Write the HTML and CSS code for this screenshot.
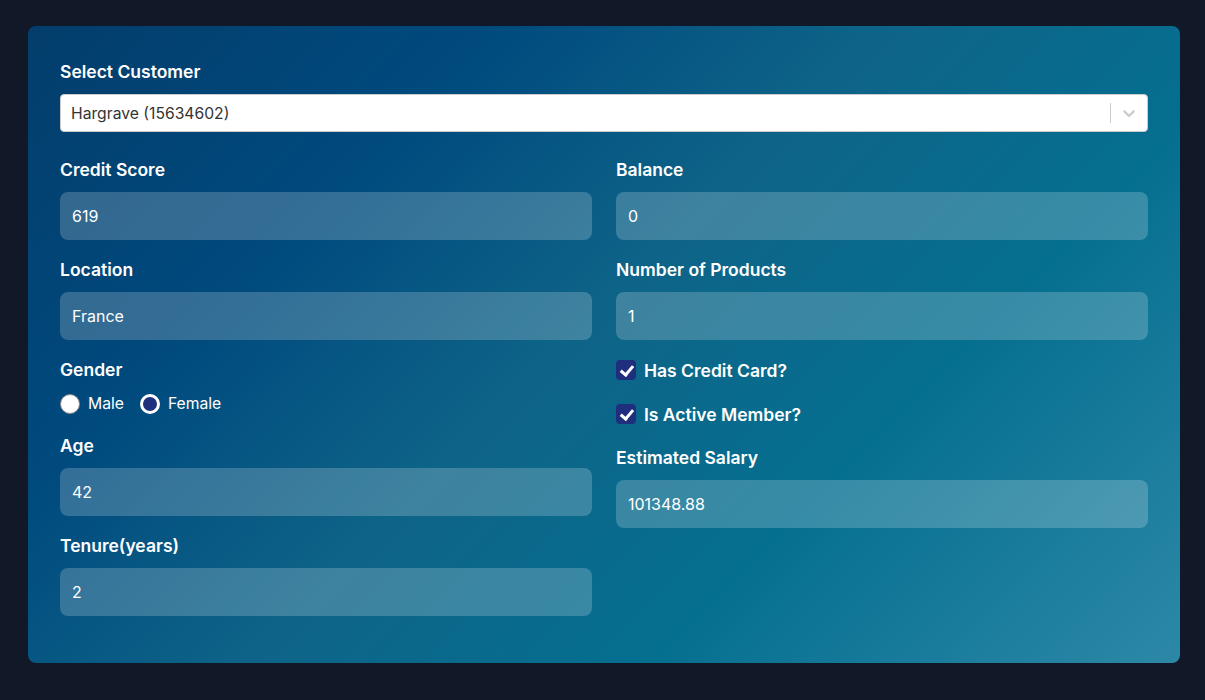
FILE: index.html
```html
<!DOCTYPE html>
<html lang="en">
<head>
<meta charset="utf-8">
<title>Customer</title>
<link rel="stylesheet" href="styles.css">
</head>
<body>
<div class="wrap">
  <div class="card">
    <div class="field">
      <label class="lbl">Select Customer</label>
      <div class="select">
        <div class="select-value">Hargrave (15634602)</div>
        <div class="indicators">
          <span class="sep"></span>
          <span class="chev">
            <svg width="20" height="20" viewBox="0 0 20 20"><path fill="#cccccc" d="M4.516 7.548c0.436-0.446 1.043-0.481 1.576 0l3.908 3.747 3.908-3.747c0.533-0.481 1.141-0.446 1.574 0 0.436 0.445 0.408 1.197 0 1.615-0.406 0.418-4.695 4.502-4.695 4.502-0.217 0.223-0.502 0.335-0.787 0.335s-0.57-0.112-0.789-0.335c0 0-4.287-4.084-4.695-4.502s-0.436-1.17 0-1.615z"/></svg>
          </span>
        </div>
      </div>
    </div>
    <div class="grid">
      <div class="col">
        <div class="field">
          <label class="lbl">Credit Score</label>
          <input class="inp" type="text" value="619">
        </div>
        <div class="field">
          <label class="lbl">Location</label>
          <input class="inp" type="text" value="France">
        </div>
        <div class="field">
          <label class="lbl">Gender</label>
          <div class="radios">
            <label class="opt"><input type="radio" name="g" class="radio">Male</label>
            <label class="opt"><input type="radio" name="g" class="radio" checked>Female</label>
          </div>
        </div>
        <div class="field">
          <label class="lbl">Age</label>
          <input class="inp" type="text" value="42">
        </div>
        <div class="field">
          <label class="lbl">Tenure(years)</label>
          <input class="inp" type="text" value="2">
        </div>
      </div>
      <div class="col">
        <div class="field">
          <label class="lbl">Balance</label>
          <input class="inp" type="text" value="0">
        </div>
        <div class="field">
          <label class="lbl">Number of Products</label>
          <input class="inp" type="text" value="1">
        </div>
        <label class="check"><input type="checkbox" class="cb" checked>Has Credit Card?</label>
        <label class="check"><input type="checkbox" class="cb" checked>Is Active Member?</label>
        <div class="field">
          <label class="lbl">Estimated Salary</label>
          <input class="inp" type="text" value="101348.88">
        </div>
      </div>
    </div>
  </div>
</div>
</body>
</html>
```
FILE: styles.css
```css
* { box-sizing: border-box; }
html, body { margin: 0; padding: 0; }
body {
  background: #111827;
  font-family: Inter, "Noto Sans", "Liberation Sans", sans-serif;
  color: #fff;
}
.wrap {
  padding: 26px 25px 0 28px;
}
.card {
  border-radius: 8px;
  padding: 32px 32px 47px;
  background: linear-gradient(135deg, #033d6b 0%, #004a7e 26%, #0e6488 48%, #056f90 70%, #2d88a7 100%);
}
.field { display: flex; flex-direction: column; }
.lbl {
  font-size: 17.5px;
  line-height: 28px;
  font-weight: 600;
  margin-bottom: 8px;
}
.select {
  display: flex;
  align-items: center;
  height: 38px;
  background: #fff;
  border: 1px solid #cccccc;
  border-radius: 4px;
  color: #333333;
  font-size: 15.7px;
  margin-bottom: 24px;
}
.select-value { flex: 1; padding: 2px 10px; }
.indicators { display: flex; align-self: stretch; align-items: center; }
.sep { width: 1px; align-self: stretch; margin: 8px 0; background: #cccccc; }
.chev { display: flex; padding: 8px; }
.grid {
  display: grid;
  grid-template-columns: 1fr 1fr;
  column-gap: 24px;
}
.col { display: flex; flex-direction: column; gap: 16px; }
.inp {
  height: 48px;
  border: none;
  border-radius: 8px;
  background: rgba(255,255,255,0.2);
  color: #fff;
  font-family: inherit;
  font-size: 16px;
  padding: 0 12px;
  outline: none;
}
.radios { display: flex; align-items: center; gap: 16px; height: 24px; }
.opt { display: flex; align-items: center; gap: 8px; font-size: 15.7px; line-height: 24px; }
.radio {
  appearance: none;
  -webkit-appearance: none;
  margin: 0;
  width: 20px;
  height: 20px;
  border-radius: 50%;
  background: #fff;
  border: 1px solid #8a8a8a;
}
.radio:checked {
  background: #1f2f7d;
  border: 3px solid #fff;
}
.check {
  display: flex;
  align-items: center;
  gap: 8px;
  height: 28px;
  font-size: 17.5px;
  font-weight: 600;
}
.cb {
  appearance: none;
  -webkit-appearance: none;
  margin: 0;
  width: 20px;
  height: 20px;
  border-radius: 4px;
  background: #fff;
  position: relative;
}
.cb:checked { background: #1f2f7d; }
.cb:checked::after {
  content: "";
  position: absolute;
  left: 6.5px;
  top: 2.5px;
  width: 5px;
  height: 10px;
  border-right: 3px solid #fff;
  border-bottom: 3px solid #fff;
  transform: rotate(40deg);
}
```
